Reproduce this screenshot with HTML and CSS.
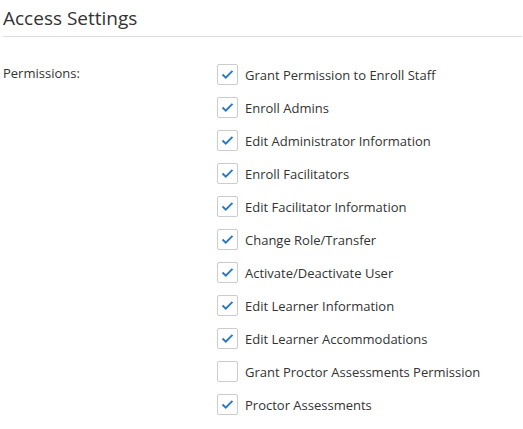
FILE: index.html
```html
<!DOCTYPE html>
<html>
<head>
<meta charset="utf-8">
<link rel="stylesheet" href="styles.css">
</head>
<body>
<div class="panel">
  <h2 class="title">Access Settings</h2>
  <div class="row">
    <div class="label">Permissions:</div>
    <ul class="perms">
      <li class="perm"><span class="box checked"><svg viewBox="0 0 21 21"><path d="M5 10.5 L8.6 14 L16 6.5"/></svg></span><span class="text">Grant Permission to Enroll Staff</span></li>
      <li class="perm"><span class="box checked"><svg viewBox="0 0 21 21"><path d="M5 10.5 L8.6 14 L16 6.5"/></svg></span><span class="text">Enroll Admins</span></li>
      <li class="perm"><span class="box checked"><svg viewBox="0 0 21 21"><path d="M5 10.5 L8.6 14 L16 6.5"/></svg></span><span class="text">Edit Administrator Information</span></li>
      <li class="perm"><span class="box checked"><svg viewBox="0 0 21 21"><path d="M5 10.5 L8.6 14 L16 6.5"/></svg></span><span class="text">Enroll Facilitators</span></li>
      <li class="perm"><span class="box checked"><svg viewBox="0 0 21 21"><path d="M5 10.5 L8.6 14 L16 6.5"/></svg></span><span class="text">Edit Facilitator Information</span></li>
      <li class="perm"><span class="box checked"><svg viewBox="0 0 21 21"><path d="M5 10.5 L8.6 14 L16 6.5"/></svg></span><span class="text">Change Role/Transfer</span></li>
      <li class="perm"><span class="box checked"><svg viewBox="0 0 21 21"><path d="M5 10.5 L8.6 14 L16 6.5"/></svg></span><span class="text">Activate/Deactivate User</span></li>
      <li class="perm"><span class="box checked"><svg viewBox="0 0 21 21"><path d="M5 10.5 L8.6 14 L16 6.5"/></svg></span><span class="text">Edit Learner Information</span></li>
      <li class="perm"><span class="box checked"><svg viewBox="0 0 21 21"><path d="M5 10.5 L8.6 14 L16 6.5"/></svg></span><span class="text">Edit Learner Accommodations</span></li>
      <li class="perm"><span class="box"></span><span class="text">Grant Proctor Assessments Permission</span></li>
      <li class="perm"><span class="box checked"><svg viewBox="0 0 21 21"><path d="M5 10.5 L8.6 14 L16 6.5"/></svg></span><span class="text">Proctor Assessments</span></li>
    </ul>
  </div>
</div>
</body>
</html>
```
FILE: styles.css
```css
html, body {
  margin: 0;
  padding: 0;
  background: #fff;
}
body {
  font-family: "Open Sans", "Noto Sans", sans-serif;
  color: #333;
}
.panel {
  padding: 0 1px 0 3px;
}
.title {
  margin: 0;
  font-size: 19px;
  font-weight: 400;
  line-height: 24px;
  padding-top: 6px;
  padding-bottom: 6px;
  border-bottom: 1px solid #ddd;
  color: #333;
}
.row {
  display: flex;
  padding-top: 27px;
}
.label {
  width: 214px;
  font-size: 13px;
  line-height: 18px;
  padding-top: 0;
}
.perms {
  list-style: none;
  margin: 0;
  padding: 0;
  display: flex;
  flex-direction: column;
  gap: 12px;
}
.perm {
  display: flex;
  align-items: center;
  gap: 7px;
  height: 21px;
}
.box {
  width: 19px;
  height: 19px;
  border: 1px solid #ccc;
  border-radius: 2px;
  box-sizing: content-box;
  display: block;
  background: #fff;
}
.box svg {
  display: block;
  width: 19px;
  height: 19px;
}
.box path {
  fill: none;
  stroke: #2b79c2;
  stroke-width: 2.2;
}
.text {
  font-size: 13px;
  color: #333;
}
```
